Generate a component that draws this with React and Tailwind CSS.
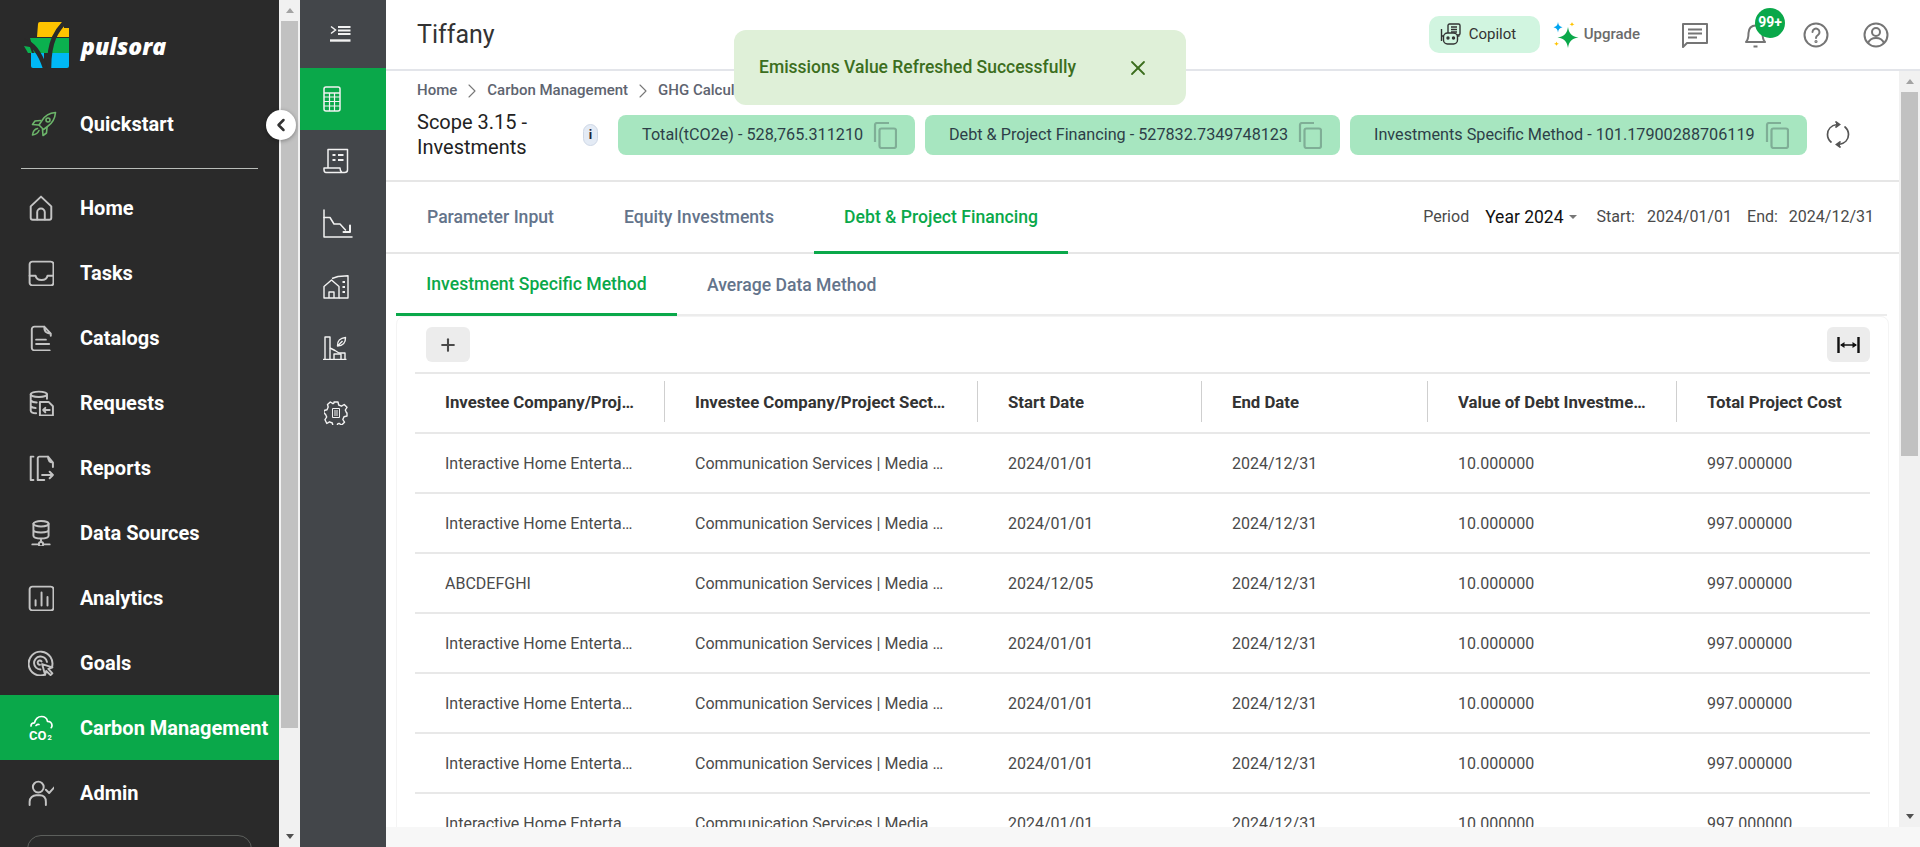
import { ChevronLeft, ChevronRight, X, Plus } from "lucide-react";

const NAV_ITEMS = [
  { label: "Home", icon: HomeIcon },
  { label: "Tasks", icon: TasksIcon },
  { label: "Catalogs", icon: CatalogIcon },
  { label: "Requests", icon: RequestsIcon },
  { label: "Reports", icon: ReportsIcon },
  { label: "Data Sources", icon: DataIcon },
  { label: "Analytics", icon: AnalyticsIcon },
  { label: "Goals", icon: GoalsIcon },
  { label: "Carbon Management", icon: CarbonIcon, active: true },
  { label: "Admin", icon: AdminIcon },
];

const COLUMNS = [
  "Investee Company/Project Name",
  "Investee Company/Project Sector",
  "Start Date",
  "End Date",
  "Value of Debt Investment",
  "Total Project Cost",
];

const ROWS = [
  ["Interactive Home Entertainment", "2024/01/01"],
  ["Interactive Home Entertainment", "2024/01/01"],
  ["ABCDEFGHI", "2024/12/05"],
  ["Interactive Home Entertainment", "2024/01/01"],
  ["Interactive Home Entertainment", "2024/01/01"],
  ["Interactive Home Entertainment", "2024/01/01"],
  ["Interactive Home Entertainment", "2024/01/01"],
];

const GRID = "grid grid-cols-[250px_313px_224px_226px_249px_193px]";

function Svg({ size = 26, children, className = "" }) {
  return (
    <svg width={size} height={size} viewBox="0 0 24 24" fill="none" stroke="currentColor" strokeWidth="1.8" strokeLinecap="round" strokeLinejoin="round" className={className}>
      {children}
    </svg>
  );
}

function HomeIcon() {
  return <Svg><path d="M2.5 10.5 12 1.5l9.5 9V21a1.8 1.8 0 0 1-1.8 1.8H4.3A1.8 1.8 0 0 1 2.5 21z" /><path d="M8.5 22.5V16a3.5 3.5 0 0 1 7 0v6.5" /></Svg>;
}
function TasksIcon() {
  return <Svg><rect x="1.5" y="1.5" width="22" height="22" rx="2.5" /><path d="M1.5 14.5H7c.6 3 2.8 4 5.5 4s4.9-1 5.5-4h5.5" /></Svg>;
}
function CatalogIcon() {
  return <Svg><path d="M15 1.5H6A2.5 2.5 0 0 0 3.500 4v17A2.500 2.500 0 0 0 6 23.500h14M15 1.500c0 4 1 6 6 6.500M15 1.500l6 6.500v2" /><path d="M7.500 13.500h9M7.500 17.500h12" /></Svg>;
}
function RequestsIcon() {
  return <Svg><ellipse cx="10" cy="4" rx="7.500" ry="2.500" /><path d="M2.500 4v15c0 1.500 2 2.500 5 2.500M17.500 4v4M2.500 9.500c1 1.200 3 2 5.500 2M2.500 15c1 1 2.500 1.500 4.500 1.700" /><path d="M11 11h8l4 4v8.500H11z" /><path d="M20 18.500h-6M16 16.500l-2 2 2 2" /></Svg>;
}
function ReportsIcon() {
  return <Svg><path d="M5 1.500H2.500v21.500H5" /><path d="M9 23V3a1.500 1.500 0 0 1 1.500-1.500h8c0 3 1 5 4.500 5.500v4M18.500 1.500l4.500 5.500" /><path d="M13 18.500h10M20 15.500l3 3-3 3M9 23h6" /></Svg>;
}
function DataIcon() {
  return <Svg><ellipse cx="12" cy="3.500" rx="7" ry="2.500" /><path d="M5 3.500v11c0 1.500 3 2.500 7 2.500s7-1 7-2.500v-11M5 9c0 1.500 3 2.500 7 2.500s7-1 7-2.500M12 17v3M4 22.500h5.500M14.500 22.500H20" /><circle cx="12" cy="22.300" r="2" /></Svg>;
}
function AnalyticsIcon() {
  return <Svg><rect x="1.500" y="1.500" width="22" height="22" rx="2.500" /><path d="M7 14v5M12.500 7v12M18 11v8" /></Svg>;
}
function GoalsIcon() {
  return <Svg><path d="M22 16a11 11 0 1 0-6.500 6.800" /><path d="M17.500 11a6 6 0 1 0-6 7" /><path d="M12.500 10.500a2 2 0 1 0-1.500 3.200" /><path d="m13 13 9.500 3-3.700 1.500 3.700 4-1.700 1.700-4-3.800-1 3.500z" fill="#2a2a2a" /></Svg>;
}
function CarbonIcon() {
  return (
    <svg width="26" height="26" viewBox="0 0 26 26" fill="none" stroke="currentColor" strokeWidth="1.700" strokeLinecap="round" strokeLinejoin="round" className="overflow-visible">
      <path d="M3 11c0-2 1.500-3.200 3.500-3.200C7.500 4 10 1.500 13.500 1.500c3.200 0 5.500 2 6 4.800 2.500 0 4.500 1.700 4.500 4.200 0 .8-.3 1.600-.8 2.200" />
      <path d="M8 10.500c1-1 2-1.300 3-1" />
      <text x="1" y="25" fontSize="13" fontWeight="700" fill="currentColor" stroke="none" fontFamily="Roboto, sans-serif">CO</text>
      <text x="19.500" y="25" fontSize="7.500" fontWeight="700" fill="currentColor" stroke="none" fontFamily="Roboto, sans-serif">2</text>
    </svg>
  );
}
function AdminIcon() {
  return <Svg><circle cx="9.500" cy="6.500" r="5" /><path d="M1.500 23v-3c0-3.500 3-6 6-6h3.500c3.500 0 5.500 2.500 5.500 6v3" /><path d="m16.500 9 3 3 5-5.500" /></Svg>;
}

function PulsoraLogo() {
  return (
    <svg width="46" height="46" viewBox="0 0 46 46" className="shrink-0">
      <path d="M14 2a2 2 0 0 1 2-2h24v15H13z" fill="#ffc400" />
      <path d="M38 6h7v9h-7z" fill="#ffc400" />
      <path d="M6 16h39v15H10z" fill="#0bb14f" />
      <path d="M0 24l6 1 2 6H4z" fill="#0bb14f" />
      <path d="M7 31h13v15H9a2 2 0 0 1-2-2z" fill="#00b8f5" />
      <path d="M26 31h19v13a2 2 0 0 1-2 2H26z" fill="#00b8f5" />
      <path d="M42 -1C33 8 25 18 25 46" fill="none" stroke="#2a2a2a" strokeWidth="4.500" />
      <path d="M0 19c10 3 16 12 21 27" fill="none" stroke="#2a2a2a" strokeWidth="4.500" />
    </svg>
  );
}

function Rocket() {
  return (
    <svg width="26" height="26" viewBox="0 0 26 26" fill="none" stroke="#6cb56a" strokeWidth="1.600" strokeLinejoin="round" strokeLinecap="round">
      <path d="M24.500 1.500c-6 .5-10.500 3-13.500 8L8 14l4.500 4.500 4-3c4.500-3 7.500-8 8-14z" />
      <circle cx="17" cy="9" r="2" />
      <path d="M9.500 9.500 4 10l-2.500 3.500 6 .5M16 16.500l-.5 5.500-3.500 2.500-.5-6" />
      <path d="M6.500 17.500c-2.500.5-4.500 3-5 6.500 3-.5 5.500-2 6.500-4.500" />
    </svg>
  );
}

function Sidebar() {
  return (
    <div className="w-[279px] shrink-0 bg-[#2a2a2a] overflow-hidden">
      <div className="h-[90px] flex items-center pl-[24px] gap-[11px]">
        <PulsoraLogo />
        <span className="text-white text-[23px] font-extrabold italic leading-none mt-[3px] font-['Open_Sans']">pulsora</span>
      </div>
      <div className="h-[68px] flex items-center pl-[31px] gap-[23px]">
        <Rocket />
        <span className="text-white text-[20px] font-bold">Quickstart</span>
      </div>
      <div className="mx-[21px] mt-[10px] mb-[6px] border-t border-[#b9bdb9]" />
      {NAV_ITEMS.map(({ label, icon: Icon, active }) => (
        <div key={label} className={`h-[65px] flex items-center ${active ? "bg-[#0aa84a]" : ""}`}>
          <div className={`w-[80px] pl-[28px] shrink-0 ${active ? "text-white" : "text-[#c4c4c4]"}`}><Icon /></div>
          <span className="text-white text-[20px] font-bold whitespace-nowrap">{label}</span>
        </div>
      ))}
      <div className="mx-[27px] mt-[10px] h-[40px] border border-[#5c5f5c] rounded-[14px]" />
    </div>
  );
}

function ScrollBar({ thumb }) {
  return (
    <div className="w-[21px] shrink-0 bg-[#f1f1f1] flex flex-col items-center">
      <div className="h-[21px] shrink-0 flex items-center justify-center">
        <div className="w-0 h-0 border-x-[4.5px] border-x-transparent border-b-[5px] border-b-[#a3a3a3]" />
      </div>
      <div className={`w-[17px] shrink-0 bg-[#c1c1c1] ${thumb}`} />
      <div className="flex-1" />
      <div className="h-[21px] shrink-0 flex items-center justify-center">
        <div className="w-0 h-0 border-x-[4.5px] border-x-transparent border-t-[5px] border-t-[#505050]" />
      </div>
    </div>
  );
}

function Rail() {
  return (
    <div className="w-[86px] shrink-0 bg-[#43464a] text-[#f2f2f2] flex flex-col">
      <div className="h-[68px] flex items-center pl-[30px]">
        <svg width="21" height="18" viewBox="0 0 21 18" fill="none" stroke="currentColor" strokeWidth="1.500">
          <path d="m1 1.500 4.500 3.500L1 8.500" />
          <path d="M8 2h12.500M8 5.500h12.500M8 9h12.500" strokeWidth="1.800" />
          <path d="M0 15.500h20.500" strokeWidth="2.400" />
        </svg>
      </div>
      <div className="h-[62px] bg-[#0aa84a] flex items-center pl-[23px]">
        <svg width="18" height="26" viewBox="0 0 18 26" fill="none" stroke="currentColor" strokeWidth="1.500">
          <rect x="1" y="1" width="16" height="24" rx="2" />
          <path d="M1 7h16" />
          <path d="M1 11h16M1 15.500h16M1 20h16M6.500 7v18M11.500 7v18" strokeWidth="1.200" />
        </svg>
      </div>
      <div className="h-[62px] flex items-center pl-[23px]">
        <svg width="26" height="26" viewBox="0 0 26 26" fill="none" stroke="currentColor" strokeWidth="1.500" strokeLinejoin="round">
          <path d="M5 20V1.500h19.500V22c0 1.500-1.500 2.500-3 2.500H3C1.800 24.500 1 23 1 21.500V20h16c0 2 .5 3.500 2 4.500" />
          <path d="M9.500 7h3M9.500 12h3M15 7h5.500M15 12h5.500" strokeWidth="2" />
        </svg>
      </div>
      <div className="h-[63px] flex items-center pl-[23px]">
        <svg width="30" height="30" viewBox="0 0 30 30" fill="none" stroke="currentColor" strokeWidth="1.500" strokeLinejoin="round" strokeLinecap="round">
          <path d="M1 1v27h28" />
          <path d="M1 8.500h6l4 6.500h6l5.500 6" />
          <path d="M27 16.500V23h-6.500" strokeWidth="2" />
        </svg>
      </div>
      <div className="h-[63px] flex items-center pl-[23px]">
        <svg width="26" height="24" viewBox="0 0 26 24" fill="none" stroke="currentColor" strokeWidth="1.400" strokeLinejoin="round">
          <path d="M1 11.500 8.500 5 16 11.500V23H1z" />
          <path d="M6 23v-6h5v6" />
          <path d="M9 3.500 15 1.500 25 .8V23h-9" />
          <path d="M19.500 7h2.500M19.500 12h2.500M19.500 17h2.500" strokeWidth="2" />
        </svg>
      </div>
      <div className="h-[63px] flex items-center pl-[23px] pb-[3px]">
        <svg width="24" height="24" viewBox="0 0 24 24" fill="none" stroke="currentColor" strokeWidth="1.400" strokeLinejoin="round">
          <path d="M0 23.500h23.500" />
          <path d="M2 23V1h5v22" />
          <path d="M7 12l5 2.500 4 2.500h6v6.500" />
          <path d="M11 23v-5h7v5" />
          <path d="M14.500 10c-.5-5 3-8 8-8.500.2 5-2.500 8.500-8 8.500zM14.500 10l5-5" />
        </svg>
      </div>
      <div className="h-[63px] flex items-center pl-[24px]">
        <svg width="24" height="24" viewBox="0 0 24 24" fill="none" stroke="currentColor" strokeWidth="1.400" strokeLinejoin="round">
          <path d="M10 1h4l.7 3 2.800 1.200L20.200 3.500 23 6.300l-1.700 2.700 1.200 2.800.5.200v3l-3 .7-1.200 2.800 1.700 2.700-2.800 2.800-2.700-1.700-1.300.5-.7 2.200h-4l-.7-3-2.800-1.200-2.700 1.700L1 18.700l1.700-2.700-1.200-2.800L0 12.500v-3l3-.7 1.200-2.800L3.500 3.500 6.300 1l2.700 1.700 1-.7z" />
          <path d="M8.500 7.500h7v9h-7zM10 10h4M10 12h4M10 14h4" strokeWidth="1" />
        </svg>
      </div>
    </div>
  );
}

function CopyIcon() {
  return (
    <svg width="24" height="27" viewBox="0 0 24 27" fill="none" stroke="#7fae96" strokeWidth="2.200" className="shrink-0">
      <path d="M2 20V3a2 2 0 0 1 2-2h12" />
      <rect x="6.500" y="6.500" width="16.500" height="19.500" rx="2" />
    </svg>
  );
}

function Chip({ children, className }) {
  return (
    <div className={`h-[40px] shrink-0 rounded-[8px] bg-[#a7e6c0] flex items-center justify-between pl-[24px] pr-[18px] text-[16.2px] text-[#2d3f48] whitespace-nowrap ${className}`}>
      <span>{children}</span>
      <CopyIcon />
    </div>
  );
}

function TopBar() {
  return (
    <div className="h-[71px] shrink-0 border-b-2 border-[#e3e5ea] flex items-center pl-[31px] relative">
      <span className="text-[25px] text-[#333333]">Tiffany</span>
      <div className="ml-auto flex items-center pr-[31px]">
        <div className="h-[37px] w-[111px] rounded-[10px] bg-[#d1f5e0] flex items-center pl-[11px] gap-[8px] text-[15px] text-[#333333] -mt-[1px]">
          <svg width="21" height="22" viewBox="0 0 21 22" fill="none" stroke="#333" strokeWidth="1.400" strokeLinejoin="round">
            <rect x="8" y="1" width="12" height="11" rx="1.500" />
            <path d="M11 4h6M11 6.500h6M11 9h6" />
            <path d="M1.500 18V6" />
            <rect x="3.500" y="10" width="14" height="11" rx="4" fill="#d1f5e0" />
            <path d="M1.500 13h2M17.500 13h2" />
            <circle cx="8" cy="15" r="1" fill="#333" />
            <circle cx="13.500" cy="15" r="1" fill="#333" />
          </svg>
          Copilot
        </div>
        <svg width="26" height="26" viewBox="0 0 26 26" className="ml-[13px]">
          <path d="M15 5c.9 6 3 9.200 10.500 10.500C18 16.800 15.900 20 15 26c-.9-6-3-9.200-10.500-10.500C12 14.200 14.100 11 15 5z" fill="#0aa84a" />
          <path d="M5 0c.4 3 1.400 4.300 4.500 5.200C6.400 6.100 5.400 7.500 5 10.500 4.600 7.500 3.600 6.100.5 5.200 3.600 4.300 4.600 3 5 0z" fill="#00a5f0" />
          <path d="M19 0c.3 1.300.8 1.800 2.500 2.300-1.700.5-2.200 1-2.500 2.300-.3-1.300-.8-1.800-2.500-2.300 1.700-.5 2.200-1 2.500-2.300z" fill="#ffc400" />
          <path d="M3.500 19.500c.3 1.300.8 1.800 2.500 2.300-1.700.5-2.200 1-2.500 2.300-.3-1.300-.8-1.800-2.500-2.300 1.700-.5 2.200-1 2.500-2.300z" fill="#ffc400" />
        </svg>
        <span className="text-[15px] font-medium text-[#6b6b6b] ml-[5px]">Upgrade</span>
        <svg width="26" height="26" viewBox="0 0 26 26" fill="none" stroke="#757575" strokeWidth="2" className="ml-[42px]" strokeLinejoin="round">
          <path d="M1 25V2h24v19H5z" />
          <path d="M6 7.500h14M6 11.500h14M6 15.500h9" />
        </svg>
        <div className="relative ml-[37px] w-[21px] h-[26px]">
          <svg width="21" height="26" viewBox="0 0 21 26" fill="none" stroke="#757575" strokeWidth="2">
            <path d="M1 20c2-2 2.500-4 2.500-9 0-4.500 3-7.500 7-7.500s7 3 7 7.500c0 5 .5 7 2.500 9z" strokeLinejoin="round" />
            <path d="M8.500 24.500h4" />
          </svg>
          <div className="absolute -top-[14px] left-[10px] w-[30px] h-[30px] rounded-full bg-[#0aa84a] text-white text-[14px] font-bold flex items-center justify-center">99+</div>
        </div>
        <svg width="26" height="26" viewBox="0 0 26 26" fill="none" stroke="#757575" strokeWidth="2" className="ml-[37px]" strokeLinecap="round">
          <circle cx="13" cy="13" r="11.500" />
          <path d="M9.500 10a3.500 3.500 0 1 1 5.500 3c-1.500 1-2 1.500-2 3" />
          <circle cx="13" cy="19.500" r=".6" />
        </svg>
        <svg width="26" height="26" viewBox="0 0 26 26" fill="none" stroke="#757575" strokeWidth="2" className="ml-[34px]">
          <circle cx="13" cy="13" r="11.500" />
          <circle cx="13" cy="10" r="4" />
          <path d="M5 21c1.500-3.500 4.500-5 8-5s6.500 1.500 8 5" />
        </svg>
      </div>
    </div>
  );
}

function Breadcrumb() {
  const parts = ["Home", "Carbon Management", "GHG Calculator"];
  return (
    <div className="h-[38px] flex items-center pl-[31px] pt-[1px] text-[15px] font-medium text-[#5e6470]">
      {parts.map((p, i) => (
        <span key={p} className="flex items-center">
          {i > 0 && <ChevronRight size={24} strokeWidth={1.100} className="mx-[3px] text-[#777777]" />}
          {p}
        </span>
      ))}
    </div>
  );
}

function ScopeRow() {
  return (
    <div className="h-[73px] flex pl-[31px] border-b-2 border-[#e6e6e6]">
      <div className="w-[160px] shrink-0 text-[20px] leading-[25px] text-[#222222] pt-[1px]">Scope 3.15 - Investments</div>
      <div className="w-[40px] flex items-start">
        <div className="mt-[15px] ml-[6px] w-[15px] h-[22px] rounded-full bg-[#e4ebf5] border border-[#cfd8e6] text-[#223] text-[13px] font-bold flex items-center justify-center">i</div>
      </div>
      <div className="flex gap-[10px] ml-[1px] pt-[6px] h-[46px]">
        <Chip className="w-[297px]">Total(tCO2e) - 528,765.311210</Chip>
        <Chip className="w-[415px]">Debt &amp; Project Financing - 527832.7349748123</Chip>
        <Chip className="w-[457px]">Investments Specific Method - 101.17900288706119</Chip>
      </div>
      <svg width="24" height="27" viewBox="0 0 24 27" fill="none" stroke="#555" strokeWidth="1.700" strokeLinecap="round" className="ml-[19px] mt-[12px]">
        <path d="M11 3.500C5 4.500 1.500 8.500 1.500 13.500c0 3 1.200 5.500 3.500 7.500" />
        <path d="M13 23.500c6-1 9.500-5 9.500-10 0-3-1.200-5.500-3.500-7.500" />
        <path d="M10 1l3.500 2.500L10 6" fill="#555" />
        <path d="M14 21l-3.500 2.500L14 26" fill="#555" />
      </svg>
    </div>
  );
}

function TabBar() {
  return (
    <div className="h-[72px] flex border-b-2 border-[#e6e6e6] relative">
      <div className="w-[207px] pl-[41px] pt-[1px] flex items-center text-[17.6px] font-medium text-[#64748b] whitespace-nowrap">Parameter Input</div>
      <div className="w-[221px] pl-[31px] pt-[1px] flex items-center text-[17.6px] font-medium text-[#64748b] whitespace-nowrap">Equity Investments</div>
      <div className="w-[254px] -mb-[2px] pt-[1px] flex items-center justify-center text-[17.6px] font-medium text-[#0aa84a] border-b-[3px] border-[#0aa84a] whitespace-nowrap">Debt &amp; Project Financing</div>
      <div className="ml-auto pr-[25px] flex items-center text-[16px] text-[#4a4a4a]">
        <span>Period</span>
        <span className="ml-[16px] text-[17.5px] text-[#111111]">Year 2024</span>
        <span className="ml-[5px] w-0 h-0 border-x-[4px] border-x-transparent border-t-[4px] border-t-[#777777]" />
        <span className="ml-[20px]">Start:</span>
        <span className="ml-[12px]">2024/01/01</span>
        <span className="ml-[15px]">End:</span>
        <span className="ml-[11px]">2024/12/31</span>
      </div>
    </div>
  );
}

function SubTabs() {
  return (
    <div className="h-[62px] ml-[10px] mr-[12px] flex border-b-2 border-[#ececec]">
      <div className="w-[281px] -mb-[2px] pt-[2px] flex items-center justify-center text-[17.6px] font-medium text-[#0aa84a] border-b-[3px] border-[#0aa84a]">Investment Specific Method</div>
      <div className="pl-[30px] pt-[2px] flex items-center text-[17.6px] font-medium text-[#64748b]">Average Data Method</div>
    </div>
  );
}

function DataTable() {
  return (
    <div className="ml-[10px] mr-[10px] border border-[#f4f4f4] rounded-[8px] px-[18px] overflow-hidden">
      <div className="h-[55px] flex items-start justify-between pt-[10px] pl-[11px]">
        <button className="w-[44px] h-[35px] rounded-[6px] bg-[#ececec] flex items-center justify-center text-[#4a4a4a]"><Plus size={20} strokeWidth={2.500} /></button>
        <button className="w-[43px] h-[35px] rounded-[6px] bg-[#ececec] flex items-center justify-center">
          <svg width="23" height="18" viewBox="0 0 23 18" fill="none" stroke="#111" strokeWidth="2.400">
            <path d="M1.500 1v16M21.500 1v16" />
            <path d="M4 9h15" strokeWidth="1.300" />
            <path d="M3 9l4.500-3v6zM20 9l-4.500-3v6z" fill="#111" stroke="none" />
          </svg>
        </button>
      </div>
      <div className={`${GRID} h-[62px] border-y-2 border-[#e8e8e8]`}>
        {COLUMNS.map((c, i) => (
          <div key={c} className="relative pl-[30px] pr-[30px] last:pr-0 flex items-center min-w-0 text-[16.8px] font-bold text-[#333333]">
            <span className="truncate">{c}</span>
            {i < 5 && <span className="absolute right-0 top-[7px] bottom-[10px] w-px bg-[#cfcfcf]" />}
          </div>
        ))}
      </div>
      {ROWS.map(([name, start], r) => (
        <div key={r} className={`${GRID} h-[60px] border-b-2 border-[#e8e8e8] text-[16px] text-[#4a4a4a]`}>
          {[name, "Communication Services | Media & Entertainment", start, "2024/12/31", "10.000000", "997.000000"].map((v, i) => (
            <div key={i} className="pl-[30px] pr-[30px] pt-[2px] flex items-center min-w-0"><span className="truncate">{v}</span></div>
          ))}
        </div>
      ))}
    </div>
  );
}

export default function App() {
  return (
    <div className="relative w-[1920px] h-[847px] flex overflow-hidden bg-white font-['Roboto',sans-serif]">
      <Sidebar />
      <ScrollBar thumb="h-[707px]" />
      <Rail />
      <div className="flex-1 min-w-0 flex flex-col">
        <TopBar />
        <div className="flex-1 min-h-0 flex">
          <div className="flex-1 min-w-0 overflow-hidden">
            <Breadcrumb />
            <ScopeRow />
            <TabBar />
            <SubTabs />
            <DataTable />
          </div>
          <ScrollBar thumb="h-[364px]" />
        </div>
        <div className="h-[20px] shrink-0 bg-[#f7f7f7]" />
      </div>

      <button className="absolute left-[266px] top-[110px] w-[30px] h-[30px] rounded-full bg-white shadow-[0_1px_4px_rgba(0,0,0,0.35)] flex items-center justify-center text-[#333333]">
        <ChevronLeft size={20} strokeWidth={3} />
      </button>

      <div className="absolute left-[734px] top-[30px] w-[452px] h-[75px] rounded-[12px] bg-[#dff0d8] flex items-center justify-between pl-[25px] pr-[36px] text-[#3c6e1e]">
        <span className="text-[17.500px] font-medium">Emissions Value Refreshed Successfully</span>
        <X size={24} strokeWidth={1.800} />
      </div>
    </div>
  );
}
